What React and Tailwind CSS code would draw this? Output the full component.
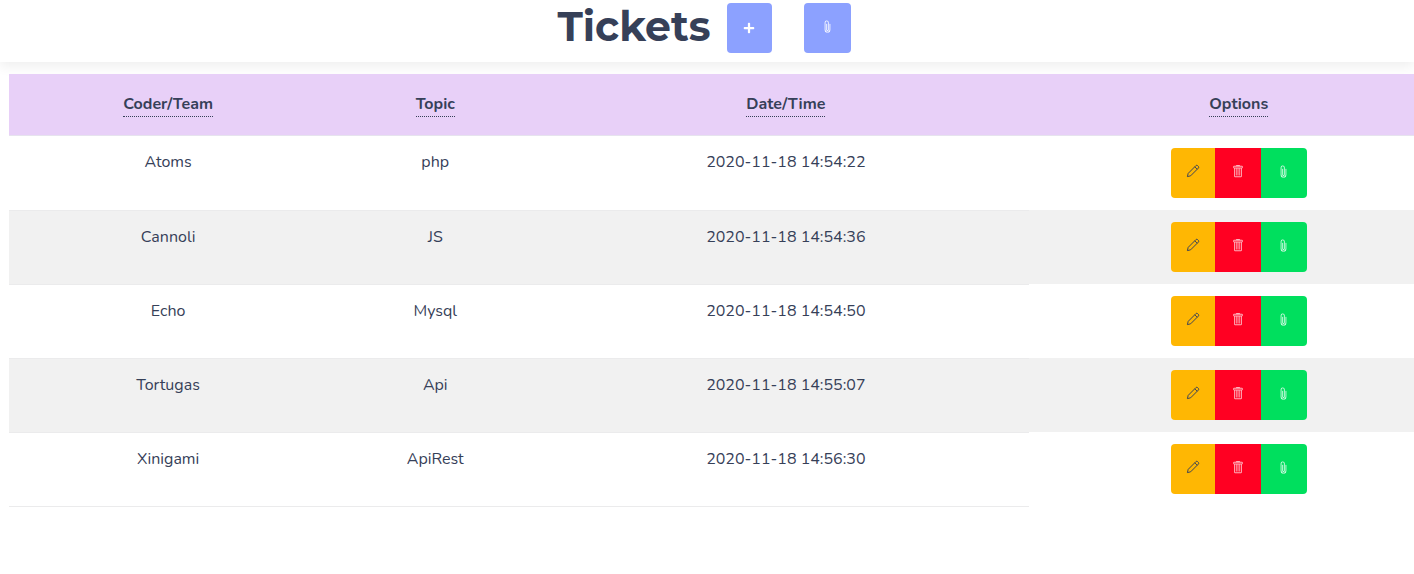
import React from "react";
import { BsPaperclip } from "react-icons/bs";
import { FaPlus } from "react-icons/fa";

const tickets = [
  { coder: "Atoms", topic: "php", date: "2020-11-18 14:54:22" },
  { coder: "Cannoli", topic: "JS", date: "2020-11-18 14:54:36" },
  { coder: "Echo", topic: "Mysql", date: "2020-11-18 14:54:50" },
  { coder: "Tortugas", topic: "Api", date: "2020-11-18 14:55:07" },
  { coder: "Xinigami", topic: "ApiRest", date: "2020-11-18 14:56:30" },
];

const columns = [
  { label: "Coder/Team", width: "w-[22.1%]" },
  { label: "Topic", width: "w-[15%]" },
  { label: "Date/Time", width: "w-[33.7%]" },
  { label: "Options", width: "" },
];

function PencilIcon() {
  return (
    <svg viewBox="0 0 16 16" className="size-[14px]" fill="none" stroke="currentColor" strokeWidth="1.1" strokeLinejoin="round" aria-hidden="true">
      <path d="M1.6 14.4l.9-3.7L11.4 1.8c.5-.5 1.3-.5 1.8 0l1 1c.5.5.5 1.3 0 1.8L5.3 13.5l-3.7.9z" />
      <path d="M10 3.2l2.8 2.8" />
    </svg>
  );
}

function TrashIcon() {
  return (
    <svg viewBox="0 0 13 16" className="h-[14px] w-[12px]" fill="currentColor" aria-hidden="true">
      <path
        fillRule="evenodd"
        d="M11 2H9c0-.55-.45-1-1-1H5c-.55 0-1 .45-1 1H2c-.55 0-1 .45-1 1v1c0 .55.45 1 1 1v9c0 .55.45 1 1 1h7c.55 0 1-.45 1-1V5c.55 0 1-.45 1-1V3c0-.55-.45-1-1-1zm-1 12H3V5h1v8h1V5h1v8h1V5h1v8h1V5h1v9zm1-10H2V3h9v1z"
      />
    </svg>
  );
}

function TextCell({ children }) {
  return (
    <td className="border-t border-[#ebebec] px-3 pt-[14px] align-top group-first:border-t-0 group-last:h-[75px] group-last:border-b">
      {children}
    </td>
  );
}

function TicketRow({ ticket }) {
  return (
    <tr className="group even:bg-[#f1f1f1]">
      <TextCell>{ticket.coder}</TextCell>
      <TextCell>{ticket.topic}</TextCell>
      <TextCell>{ticket.date}</TextCell>
      <td className="p-3 align-top">
        <div className="flex justify-center text-[13px] text-white/70">
          <button type="button" aria-label="Edit" className="flex h-[50px] w-11 items-center justify-center rounded-l bg-[#ffb703] pb-1 text-[#364058]">
            <PencilIcon />
          </button>
          <button type="button" aria-label="Delete" className="flex h-[50px] w-[46px] items-center justify-center bg-[#ff0022] pb-1">
            <TrashIcon />
          </button>
          <button type="button" aria-label="Attach" className="flex h-[50px] w-[46px] items-center justify-center rounded-r bg-[#00df5e] pb-1 text-white/90">
            <BsPaperclip />
          </button>
        </div>
      </td>
    </tr>
  );
}

export default function App() {
  return (
    <div className="overflow-x-hidden bg-white font-['Nunito','Open_Sans',sans-serif] text-base text-[#364058]">
      <header className="flex justify-center pt-[3px] pr-[6px] pb-[9px] shadow-[0_4px_12px_rgba(0,0,0,0.07)]">
        <h1 className="mr-4 font-['Montserrat','Inter',sans-serif] text-[41px] leading-[46px] font-bold">
          Tickets
        </h1>
        <button type="button" aria-label="Add ticket" className="mr-8 flex h-[50px] w-[45px] items-center justify-center rounded bg-[#8ca1ff] text-[12px] text-white">
          <FaPlus />
        </button>
        <button type="button" aria-label="Attachments" className="flex h-[50px] w-[47px] items-center justify-center rounded bg-[#8ca1ff] pb-1 text-[13px] text-white">
          <BsPaperclip />
        </button>
      </header>
      <main className="relative ml-[9px] pt-3">
        <table className="w-[calc(100%+35px)] table-fixed border-separate border-spacing-0 text-center">
          <thead className="bg-[#e8d0f8]">
            <tr>
              {columns.map((column) => (
                <th key={column.label} scope="col" className={`${column.width} border-b border-[#e6e3ee] pt-[18px] pb-[18px] align-top leading-6 font-bold`}>
                  <span className="mx-auto block w-fit border-b border-dotted border-[#364058]">{column.label}</span>
                </th>
              ))}
            </tr>
          </thead>
          <tbody>
            {tickets.map((ticket) => (
              <TicketRow key={ticket.coder} ticket={ticket} />
            ))}
          </tbody>
        </table>
      </main>
    </div>
  );
}
